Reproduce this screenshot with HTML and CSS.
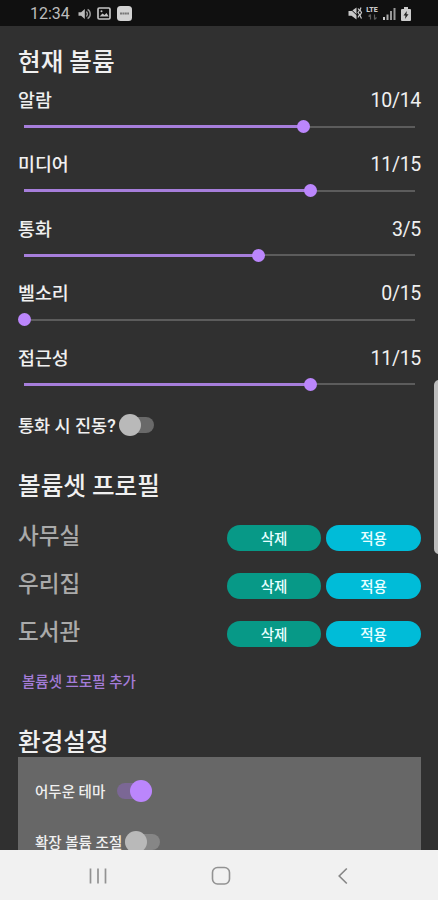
FILE: index.html
```
<!DOCTYPE html>
<html lang="ko">
<head>
    <meta charset="UTF-8">
    <meta name="viewport" content="width=device-width, initial-scale=1.0">
    <title>볼륨셋</title>
    <link rel="stylesheet" href="styles.css">
</head>
<body>
    <!-- Status bar -->
    <header class="status-bar">
        <div class="status-left">
            <span class="clock">12:34</span>
            <svg class="icon-sound" width="13" height="12" viewBox="0 0 13 12">
                <path d="M0.5 4.2h2.6L6.8 1v10L3.100 7.800H0.500z" fill="#bbb"/>
                <path d="M8.300 3.600a3.200 3.200 0 0 1 0 4.800M9.600 1.300a5.500 5.500 0 0 1 0 9.400" fill="none" stroke="#999" stroke-width="1.400"/>
            </svg>
            <svg class="icon-image" width="14" height="13" viewBox="0 0 14 13">
                <rect x="1" y="1" width="12" height="11" rx="1.200" fill="none" stroke="#c4c4c4" stroke-width="1.700"/>
                <path d="M2.500 9.500l3-3 2 1.500 2-2 2.200 3.500z" fill="#c4c4c4"/>
                <circle cx="4.500" cy="4.200" r="1" fill="#c4c4c4"/>
            </svg>
            <svg class="icon-app" width="15" height="15" viewBox="0 0 15 15">
                <rect width="15" height="15" rx="3.500" fill="#d2d2d2"/>
                <path d="M3 7.500h9" stroke="#777" stroke-width="1.800" stroke-dasharray="2 .4"/>
            </svg>
        </div>
        <div class="status-right">
            <svg width="15" height="15" viewBox="0 0 15 15">
                <path d="M0.500 5h3L8.500 1.500v12l-5-3.800h-3z" fill="#c8c8c8"/>
                <path d="M1 1.500l12.500 12" stroke="#101010" stroke-width="1"/>
                <path d="M10 2.500l1.500 2-1.500 2 1.500 2-1.500 3M13 1.500l-1 2.500 1.500 2.500-1.500 3 1.500 3" fill="none" stroke="#c8c8c8" stroke-width="1.200"/>
            </svg>
            <div class="lte">
                <span>LTE</span>
                <svg width="9" height="6" viewBox="0 0 9 6">
                    <path d="M2.500 5.500v-5M.5 2.500l2-2M6.500 .5v5M8.500 3.500l-2 2" fill="none" stroke="#5c5c5c" stroke-width="1.200"/>
                </svg>
            </div>
            <svg class="icon-signal" width="13" height="13" viewBox="0 0 13 13">
                <path d="M0 10h2v3H0z" fill="#ccc"/>
                <path d="M3.500 7.500h2V13h-2z" fill="#aaa"/>
                <path d="M7 4h2v9H7z" fill="#999"/>
                <path d="M10.500 1h2v12h-2z" fill="#999"/>
            </svg>
            <svg class="icon-battery" width="10" height="14" viewBox="0 0 10 14">
                <path d="M3 0h4v2h2q1 0 1 1v10q0 1-1 1H1q-1 0-1-1V3q0-1 1-1h2z" fill="#ccc"/>
                <path d="M5.800 4L2.500 8.600h2L4 12l3.500-4.800h-2z" fill="#222"/>
            </svg>
        </div>
    </header>

    <main class="content">
        <!-- Current volume -->
        <h1 class="title">현재 볼륨</h1>

        <div class="volume">
            <div class="volume-label"><span>알람</span><span class="value">10/14</span></div>
            <div class="slider"><div class="fill" style="width: 71.43%"></div><div class="thumb"></div></div>
        </div>
        <div class="volume">
            <div class="volume-label"><span>미디어</span><span class="value">11/15</span></div>
            <div class="slider"><div class="fill" style="width: 73.33%"></div><div class="thumb"></div></div>
        </div>
        <div class="volume">
            <div class="volume-label"><span>통화</span><span class="value">3/5</span></div>
            <div class="slider"><div class="fill" style="width: 60%"></div><div class="thumb"></div></div>
        </div>
        <div class="volume">
            <div class="volume-label"><span>벨소리</span><span class="value">0/15</span></div>
            <div class="slider"><div class="fill" style="width: 0%"></div><div class="thumb"></div></div>
        </div>
        <div class="volume">
            <div class="volume-label"><span>접근성</span><span class="value">11/15</span></div>
            <div class="slider"><div class="fill" style="width: 73.33%"></div><div class="thumb"></div></div>
        </div>

        <div class="vibrate">
            <span>통화 시 진동?</span>
            <div class="switch"></div>
        </div>

        <!-- Profiles -->
        <h2 class="title title-profile">볼륨셋 프로필</h2>

        <div class="profile">
            <span class="profile-name">사무실</span>
            <button class="btn btn-delete">삭제</button>
            <button class="btn btn-apply">적용</button>
        </div>
        <div class="profile">
            <span class="profile-name">우리집</span>
            <button class="btn btn-delete">삭제</button>
            <button class="btn btn-apply">적용</button>
        </div>
        <div class="profile">
            <span class="profile-name">도서관</span>
            <button class="btn btn-delete">삭제</button>
            <button class="btn btn-apply">적용</button>
        </div>

        <a class="add-profile">볼륨셋 프로필 추가</a>

        <!-- Settings -->
        <h2 class="title title-settings">환경설정</h2>
        <div class="settings">
            <div class="setting setting-theme">
                <span>어두운 테마</span>
                <div class="switch on"></div>
            </div>
            <div class="setting">
                <span>확장 볼륨 조절</span>
                <div class="switch"></div>
            </div>
        </div>

        <div class="edge-handle"></div>
    </main>

    <!-- Navigation bar -->
    <nav class="nav-bar">
        <svg width="18" height="18" viewBox="0 0 18 18">
            <path d="M1.500 1.500v15M9 1.500v15M16.500 1.500v15" stroke="#929292" stroke-width="1.700"/>
        </svg>
        <svg width="20" height="20" viewBox="0 0 20 20">
            <rect x="1.500" y="1.500" width="17" height="16.500" rx="5" fill="none" stroke="#929292" stroke-width="1.600"/>
        </svg>
        <svg width="18" height="18" viewBox="0 0 18 18">
            <path d="M12.800 1.500L5.200 9l7.600 7.500" fill="none" stroke="#868686" stroke-width="1.600"/>
        </svg>
    </nav>
</body>
</html>
```
FILE: styles.css
```
:root {
    --bg-color: #303030;
    --panel-color: #676767;
    --accent-color: #bb86fc;
    --text-color: #f0f0f0;
}

* {
    box-sizing: border-box;
    margin: 0;
    padding: 0;
}

body {
    display: flex;
    flex-direction: column;
    width: 438px;
    height: 900px;
    overflow: hidden;
    background-color: var(--bg-color);
    color: var(--text-color);
    font-family: Roboto, "Noto Sans CJK KR", sans-serif;
    font-weight: 500;
}

/* Status bar */
.status-bar {
    display: flex;
    justify-content: space-between;
    flex: none;
    height: 26px;
    padding: 1px 27px 0 30px;
    background-color: #101010;
}

.status-left,
.status-right {
    display: flex;
    align-items: center;
}

.clock {
    width: 40px;
    margin-right: 8px;
    color: #bdbdbd;
    font-size: 16px;
    font-weight: 400;
}

.icon-image,
.icon-app {
    margin-left: 6px;
}

.lte {
    display: flex;
    flex-direction: column;
    align-items: center;
    width: 14px;
    margin-left: 2px;
    color: #c8c8c8;
    font-size: 7px;
    font-weight: 900;
    line-height: 7px;
}

.icon-signal {
    margin-left: 4px;
}

.icon-battery {
    margin-left: 5px;
}

/* Content */
.content {
    position: relative;
    flex: none;
    height: 824px;
    padding: 20px 17px 0 18px;
    overflow: hidden;
}

.title {
    height: 34px;
    font-size: 24.600px;
    font-weight: 500;
    line-height: 34px;
    white-space: nowrap;
}

.volume {
    height: 64.400px;
    padding-top: 7px;
    font-size: 18.400px;
}

.volume-label {
    display: flex;
    justify-content: space-between;
    height: 28px;
    margin-bottom: 4.500px;
    line-height: 27px;
}

.value {
    font-size: 19.500px;
    font-weight: 400;
    letter-spacing: -0.300px;
}

.slider {
    display: flex;
    align-items: center;
    height: 14px;
    margin: 0 6px;
    background: linear-gradient(#5c5c5c, #5c5c5c) center / 100% 2px no-repeat;
}

.fill {
    height: 3px;
    background-color: #a67edb;
}

.thumb {
    flex: none;
    width: 13px;
    height: 13px;
    margin: 0 -6.500px;
    border-radius: 50%;
    background-color: var(--accent-color);
}

.vibrate {
    display: flex;
    align-items: center;
    height: 22px;
    margin-top: 12px;
    font-size: 17.500px;
    white-space: nowrap;
}

.vibrate .switch {
    margin-left: 3px;
}

.switch {
    display: flex;
    align-items: center;
    flex: none;
    width: 35px;
    height: 16px;
    border-radius: 8px;
    background-color: #696969;
}

.switch::before {
    content: "";
    width: 22px;
    height: 22px;
    border-radius: 50%;
    background-color: #b9b9b9;
}

.switch.on {
    justify-content: flex-end;
    background-color: #7b6795;
}

.switch.on::before {
    background-color: var(--accent-color);
}

/* Profiles */
.title-profile {
    margin-top: 34px;
}

.profile {
    display: flex;
    align-items: center;
    height: 48.200px;
}

.title-profile + .profile {
    margin-top: 10px;
}

.profile-name {
    flex: 1;
    padding-bottom: 4px;
    color: #aaa;
    font-size: 22.500px;
    font-weight: 500;
    line-height: 30px;
}

.btn {
    width: 94px;
    height: 26px;
    padding-top: 2px;
    border: none;
    border-radius: 13px;
    color: #e8ffff;
    font-family: inherit;
    font-size: 14.500px;
    font-weight: 500;
    line-height: 26px;
}

.btn-delete {
    background-color: #079987;
}

.btn-apply {
    width: 95px;
    margin-left: 5px;
    background-color: #00bcd8;
}

.add-profile {
    display: block;
    height: 24px;
    margin: 12px 0 0 4px;
    color: #a47cd8;
    font-size: 14.500px;
    line-height: 24px;
}

/* Settings */
.title-settings {
    height: 31px;
    margin-top: 31px;
}

.settings {
    height: 120px;
    padding: 22px 17px;
    background-color: var(--panel-color);
}

.setting {
    display: flex;
    align-items: center;
    height: 24px;
    font-size: 14.500px;
    white-space: nowrap;
}

.setting-theme {
    margin-bottom: 27px;
}

.setting .switch {
    margin-left: 3px;
    background-color: #868686;
}

.setting .switch.on {
    margin-left: 12px;
    background-color: #7b6795;
}

.edge-handle {
    position: absolute;
    top: 354px;
    right: -6px;
    width: 10px;
    height: 174px;
    border-radius: 5px;
    background-color: #bdbdbd;
}

/* Navigation bar */
.nav-bar {
    display: flex;
    align-items: center;
    justify-content: space-between;
    flex: none;
    height: 50px;
    padding: 2px 86px 0 89px;
    background-color: #f1f1f1;
}
```
